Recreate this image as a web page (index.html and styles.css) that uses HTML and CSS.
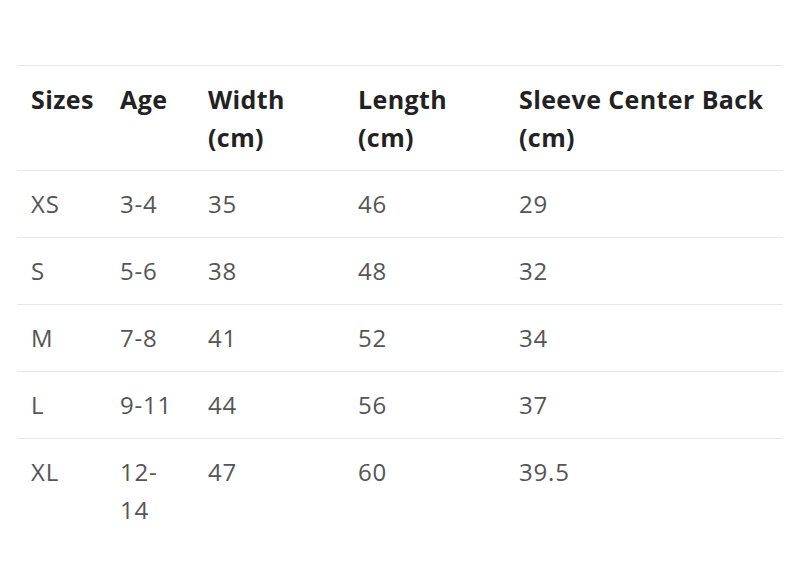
FILE: index.html
```html
<!DOCTYPE html>
<html lang="en">
<head>
<meta charset="utf-8">
<title>Size chart</title>
<link rel="stylesheet" href="styles.css">
</head>
<body>
<div class="wrap">
<table class="sizes">
<colgroup>
<col class="c1"><col class="c2"><col class="c3"><col class="c4"><col class="c5">
</colgroup>
<thead>
<tr><th>Sizes</th><th>Age</th><th>Width<br>(cm)</th><th>Length<br>(cm)</th><th>Sleeve Center Back<br>(cm)</th></tr>
</thead>
<tbody>
<tr><td>XS</td><td>3-4</td><td>35</td><td>46</td><td>29</td></tr>
<tr><td>S</td><td>5-6</td><td>38</td><td>48</td><td>32</td></tr>
<tr><td>M</td><td>7-8</td><td>41</td><td>52</td><td>34</td></tr>
<tr><td>L</td><td>9-11</td><td>44</td><td>56</td><td>37</td></tr>
<tr><td>XL</td><td>12-<br>14</td><td>47</td><td>60</td><td>39.5</td></tr>
</tbody>
</table>
</div>
</body>
</html>
```
FILE: styles.css
```css
html, body {
  margin: 0;
  background: #fff;
}
.wrap {
  padding: 65px 11px 0 17px;
}
.sizes {
  width: 766px;
  border-collapse: collapse;
  table-layout: fixed;
  font-family: "Open Sans", "Noto Sans", sans-serif;
  font-size: 24px;
  line-height: 38px;
  border-top: 1px solid #e6e6e6;
}
.c1 { width: 89px; }
.c2 { width: 88px; }
.c3 { width: 150px; }
.c4 { width: 161px; }
.c5 { width: 278px; }
.sizes th {
  text-align: left;
  vertical-align: top;
  font-size: 25px;
  font-weight: 700;
  letter-spacing: 0.4px;
  color: #222;
  padding: 14px 0 14px 14px;
  border-bottom: 1px solid #e6e6e6;
}
.sizes td {
  vertical-align: top;
  font-weight: 400;
  letter-spacing: 0.8px;
  color: #555;
  padding: 14px 4px 14px 14px;
  border-bottom: 1px solid #e6e6e6;
}
.sizes tbody tr:last-child td {
  border-bottom: none;
}
```
